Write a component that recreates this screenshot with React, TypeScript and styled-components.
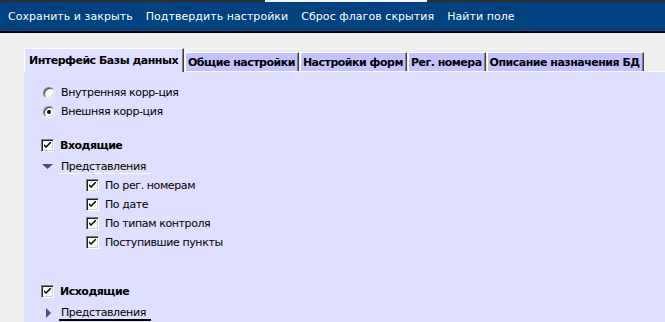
import React from "react";
import styled, { createGlobalStyle, css } from "styled-components";

const GlobalStyle = createGlobalStyle`
  html, body { margin: 0; padding: 0; background: #efefef; overflow: hidden; }
  #root { height: 322px; }
`;

const Page = styled.div`
  display: flex;
  flex-direction: column;
  height: 322px;
  font-family: "DejaVu Sans", Verdana, sans-serif;
  color: #000;
`;

const TopStrip = styled.div`
  height: 2px;
  background: linear-gradient(to right, #2e2e2e 0 265px, #f4f4f4 265px 427px, #2e2e2e 427px);
`;

const MenuBar = styled.nav`
  display: flex;
  align-items: center;
  gap: 13px;
  height: 29px;
  padding-left: 8px;
  background: #00417f;
  border-bottom: 2px solid #000;
`;

const MenuItem = styled.span`
  color: #fff;
  font-size: 11px;
  letter-spacing: 0.05px;
  white-space: nowrap;
  cursor: pointer;
`;

const Content = styled.div`
  flex: 1;
  display: flex;
  flex-direction: column;
  padding: 15px 0 0 24px;
  min-height: 0;
`;

const TabRow = styled.div`
  display: flex;
  align-items: flex-end;
  height: 23px;
  position: relative;
  z-index: 1;
`;

const Tab = styled.div<{ $active?: boolean }>`
  display: flex;
  align-items: center;
  box-sizing: border-box;
  font-weight: bold;
  font-size: 11px;
  letter-spacing: -0.5px;
  white-space: nowrap;
  border-left: 1px solid #ffffff;
  border-top: 1px solid #ffffff;
  border-right: 1px solid #404040;
  box-shadow: inset -1px 0 0 #808080;
  ${(p) =>
    p.$active
      ? css`
          height: 24px;
          margin-bottom: -1px;
          background: #dfdfff;
          padding: 0 5px 1px 4px;
        `
      : css`
          height: 19px;
          background: #c3c3ff;
          margin-left: 1px;
          padding: 0 3px 0 2px;
        `}
`;

const Panel = styled.div`
  flex: 1;
  display: flex;
  flex-direction: column;
  background: #dfdfff;
  border-top: 1px solid #f8f8ff;
  padding: 11px 0 0 17px;
  font-size: 11px;
  letter-spacing: -0.4px;
`;

const Row = styled.label<{ $indent?: number; $gap?: number; $h?: number }>`
  display: flex;
  align-items: center;
  height: ${(p) => p.$h ?? 19}px;
  margin-left: ${(p) => p.$indent ?? 0}px;
  margin-top: ${(p) => p.$gap ?? 0}px;
  gap: 6px;
  white-space: nowrap;
`;

const RadioCircle = styled.span<{ $checked?: boolean }>`
  box-sizing: border-box;
  width: 12px;
  height: 12px;
  margin-left: 2px;
  border-radius: 50%;
  background: #fff;
  border: 1px solid;
  border-color: #808080 #f0f0f0 #f0f0f0 #808080;
  box-shadow: inset 1px 1px 0 #404040, inset -1px -1px 0 #d8d8d8;
  display: flex;
  align-items: center;
  justify-content: center;
  &::after {
    content: "";
    width: 4px;
    height: 4px;
    border-radius: 50%;
    background: ${(p) => (p.$checked ? "#000" : "transparent")};
  }
`;

const CheckBox = styled.span`
  box-sizing: border-box;
  width: 13px;
  height: 13px;
  background: #fbfbfb;
  border: 1px solid;
  border-color: #808080 #ffffff #ffffff #808080;
  box-shadow: inset 1px 1px 0 #202020, inset -1px -1px 0 #d4d0c8;
  display: flex;
  align-items: center;
  justify-content: center;
  flex: none;
`;

const Bold = styled.span`
  font-weight: bold;
  letter-spacing: -0.5px;
`;

const Arrow = styled.span<{ $end?: boolean }>`
  box-sizing: border-box;
  width: 12px;
  display: flex;
  justify-content: ${(p) => (p.$end ? "flex-end" : "center")};
  padding-right: ${(p) => (p.$end ? 2 : 0)}px;
  flex: none;
`;

const TreeLabel = styled.span<{ $mode: "light" | "dark" }>`
  padding: 0 5px 0 2px;
  line-height: 13px;
  ${(p) =>
    p.$mode === "light"
      ? css`
          border-bottom: 1px solid #ffffff;
        `
      : css`
          border-bottom: 2px solid #000000;
        `}
`;

const Check = () => (
  <svg width="7" height="7" viewBox="0 0 7 7">
    <path d="M0 2 L0 4 L2 6 L7 1 L7 -1 L2 4 Z" fill="#000" />
  </svg>
);

const Box = () => (
  <CheckBox>
    <Check />
  </CheckBox>
);

const DownArrow = () => (
  <Arrow>
    <svg width="11" height="6" viewBox="0 0 11 6">
      <path d="M0 0 H11 L5.5 5 Z" fill="#4a4a98" />
    </svg>
  </Arrow>
);

const RightArrow = () => (
  <Arrow $end>
    <svg width="5" height="10" viewBox="0 0 5 10">
      <path d="M0 0 L5 5 L0 10 Z" fill="#4a4a98" />
    </svg>
  </Arrow>
);

const menu = ["Сохранить и закрыть", "Подтвердить настройки", "Сброс флагов скрытия", "Найти поле"];
const tabs = ["Интерфейс Базы данных", "Общие настройки", "Настройки форм", "Рег. номера", "Описание назначения БД"];
const incoming = ["По рег. номерам", "По дате", "По типам контроля", "Поступившие пункты"];

export default function App() {
  return (
    <>
      <GlobalStyle />
      <Page>
        <TopStrip />
        <MenuBar>
          {menu.map((m) => (
            <MenuItem key={m}>{m}</MenuItem>
          ))}
        </MenuBar>
        <Content>
          <TabRow>
            {tabs.map((t, i) => (
              <Tab key={t} $active={i === 0}>
                {t}
              </Tab>
            ))}
          </TabRow>
          <Panel>
            <Row>
              <RadioCircle />
              Внутренняя корр-ция
            </Row>
            <Row>
              <RadioCircle $checked />
              Внешняя корр-ция
            </Row>
            <Row $gap={15} $h={18}>
              <Box />
              <Bold>Входящие</Bold>
            </Row>
            <Row $gap={4} $h={18}>
              <DownArrow />
              <TreeLabel $mode="light">Представления</TreeLabel>
            </Row>
            {incoming.map((s) => (
              <Row key={s} $indent={45}>
                <Box />
                {s}
              </Row>
            ))}
            <Row $gap={30} $h={18}>
              <Box />
              <Bold>Исходящие</Bold>
            </Row>
            <Row $gap={4} $h={18}>
              <RightArrow />
              <TreeLabel $mode="dark">Представления</TreeLabel>
            </Row>
          </Panel>
        </Content>
      </Page>
    </>
  );
}
